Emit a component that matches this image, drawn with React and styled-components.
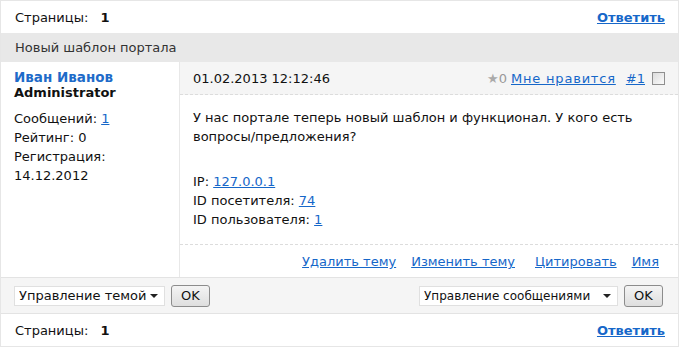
import React from "react";
import styled, { createGlobalStyle } from "styled-components";

const Global = createGlobalStyle`
  html, body { margin: 0; padding: 0; background: #fff; }
  body { font-family: "DejaVu Sans", Verdana, sans-serif; font-size: 13px; color: #111; }
  * { box-sizing: border-box; }
`;

const Frame = styled.div`
  width: 679px;
  height: 347px;
  border: 1px solid #e6e6e6;
  display: flex;
  flex-direction: column;
`;

const PagerRow = styled.div`
  height: ${(p) => p.$h}px;
  display: flex;
  align-items: center;
  justify-content: space-between;
  padding: 0 13px 0 14px;
  background: #fff;
`;

const PagerLabel = styled.span`
  color: #111;
  b { margin-left: 8px; color: #111; }
`;

const ReplyLink = styled.a`
  color: #1667c9;
  font-weight: bold;
  text-decoration: underline;
  cursor: pointer;
`;

const TitleBar = styled.div`
  height: 29px;
  background: #e8e8e8;
  color: #333;
  display: flex;
  align-items: center;
  padding-left: 14px;
`;

const Post = styled.div`
  display: grid;
  grid-template-columns: 179px 1fr;
  height: 215px;
`;

const Author = styled.div`
  border-right: 1px solid #e8e8e8;
  padding: 7px 13px;
`;

const Name = styled.div`
  color: #1e6bc9;
  font-weight: bold;
  line-height: 16px;
  font-size: 13.5px;
`;

const Role = styled.div`
  font-weight: bold;
  line-height: 16px;
  font-size: 13px;
  color: #111;
`;

const Stats = styled.div`
  margin-top: 8px;
  line-height: 19px;
`;

const Link = styled.a`
  color: #1667c9;
  text-decoration: underline;
  cursor: pointer;
  margin-left: ${(p) => p.$ml || 0}px;
  letter-spacing: ${(p) => p.$ls || 0}px;
`;

const Main = styled.div`
  display: flex;
  flex-direction: column;
`;

const Header = styled.div`
  height: 33px;
  background: #f5f5f5;
  border-bottom: 1px dashed #dcdcdc;
  display: flex;
  align-items: center;
  justify-content: space-between;
  padding: 0 13px 0 13px;
`;

const Meta = styled.div`
  display: flex;
  align-items: center;
  color: #999;
`;

const Star = styled.span`
  color: #aaa;
  font-size: 13px;
`;

const Check = styled.span`
  display: inline-block;
  width: 13px;
  height: 13px;
  border: 1px solid #8f8f8f;
  background: linear-gradient(135deg, #dcdcdc, #fbfbfb);
  margin-left: 7px;
`;

const Body = styled.div`
  flex: 1;
  padding: 13px 13px 0 13px;
  line-height: 19px;
`;

const Info = styled.div`
  margin-top: 26px;
  line-height: 19px;
`;

const Actions = styled.div`
  height: 33px;
  border-top: 1px dashed #dcdcdc;
  display: flex;
  align-items: center;
  justify-content: flex-end;
  padding-right: 19px;
  padding-top: 1px;
`;

const ModRow = styled.div`
  height: 37px;
  background: #f5f5f5;
  border-top: 1px solid #e3e3e3;
  border-bottom: 1px solid #e3e3e3;
  display: flex;
  align-items: center;
  justify-content: space-between;
  padding: 0 15px 0 13px;
`;

const Group = styled.div`
  display: flex;
  align-items: center;
  gap: 6px;
`;

const SelectWrap = styled.div`
  position: relative;
  width: ${(p) => p.$w}px;
  height: 20px;
`;

const Select = styled.select`
  appearance: none;
  -webkit-appearance: none;
  width: 100%;
  height: 20px;
  border: 1px solid #e0e0e0;
  background: #fff;
  font-family: "DejaVu Sans", Verdana, sans-serif;
  font-size: ${(p) => p.$fs}px;
  color: #111;
  padding: 0 18px 0 4px;
  outline: none;
`;

const Arrow = styled.span`
  position: absolute;
  right: 7px;
  top: 8px;
  width: 0;
  height: 0;
  border-left: 4px solid transparent;
  border-right: 4px solid transparent;
  border-top: 4px solid #222;
  pointer-events: none;
`;

const Button = styled.button`
  width: 39px;
  height: 22px;
  border: 1px solid #8c8c8c;
  border-radius: 3px;
  background: linear-gradient(#f4f4f4, #dedede);
  font-family: "DejaVu Sans", Verdana, sans-serif;
  font-size: 13px;
  color: #111;
  padding: 0;
`;

function Pager({ h }) {
  return (
    <PagerRow $h={h}>
      <PagerLabel>
        Страницы: <b>1</b>
      </PagerLabel>
      <ReplyLink>Ответить</ReplyLink>
    </PagerRow>
  );
}

function ModSelect({ w, fs, label }) {
  return (
    <SelectWrap $w={w}>
      <Select defaultValue="a" $fs={fs}>
        <option value="a">{label}</option>
      </Select>
      <Arrow />
    </SelectWrap>
  );
}

export default function App() {
  return (
    <>
      <Global />
      <Frame>
        <Pager h={32} />
        <TitleBar>Новый шаблон портала</TitleBar>
        <Post>
          <Author>
            <Name>Иван Иванов</Name>
            <Role>Administrator</Role>
            <Stats>
              <div>
                Сообщений: <Link>1</Link>
              </div>
              <div>Рейтинг: 0</div>
              <div>Регистрация:</div>
              <div>14.12.2012</div>
            </Stats>
          </Author>
          <Main>
            <Header>
              <span>01.02.2013 12:12:46</span>
              <Meta>
                <Star>★</Star>0
                <Link $ml={4} $ls={0.8}>Мне нравится</Link>
                <Link $ml={10}>#1</Link>
                <Check />
              </Meta>
            </Header>
            <Body>
              <div>
                У нас портале теперь новый шаблон и функционал. У кого есть
                вопросы/предложения?
              </div>
              <Info>
                <div>
                  IP: <Link>127.0.0.1</Link>
                </div>
                <div>
                  ID посетителя: <Link>74</Link>
                </div>
                <div>
                  ID пользователя: <Link>1</Link>
                </div>
              </Info>
            </Body>
            <Actions>
              <Link>Удалить тему</Link>
              <Link $ml={15}>Изменить тему</Link>
              <Link $ml={20}>Цитировать</Link>
              <Link $ml={15}>Имя</Link>
            </Actions>
          </Main>
        </Post>
        <ModRow>
          <Group>
            <ModSelect w={151} fs={13} label="Управление темой" />
            <Button>OK</Button>
          </Group>
          <Group>
            <ModSelect w={199} fs={12} label="Управление сообщениями" />
            <Button>OK</Button>
          </Group>
        </ModRow>
        <Pager h={32} />
      </Frame>
    </>
  );
}
